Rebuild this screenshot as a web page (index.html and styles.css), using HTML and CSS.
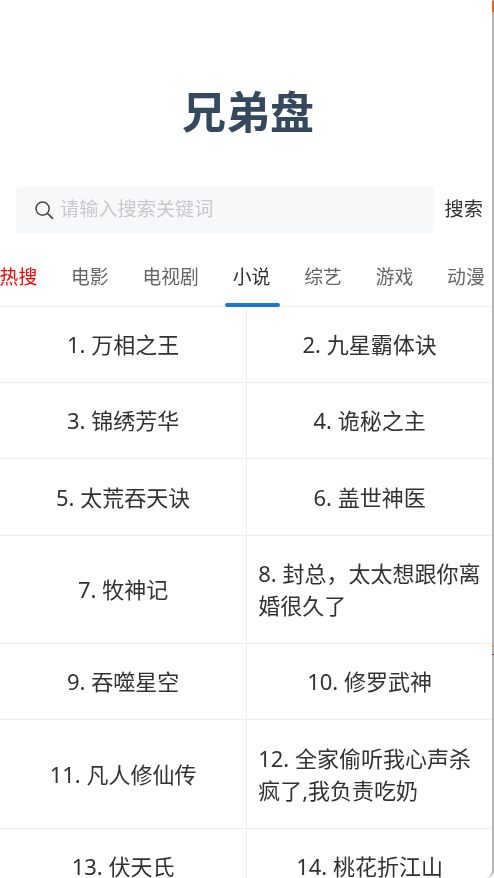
FILE: index.html
```html
<!DOCTYPE html>
<html lang="zh">
<head>
<meta charset="utf-8">
<title>兄弟盘</title>
<link rel="stylesheet" href="styles.css">
</head>
<body>
<div class="frame">
  <h1 class="title">兄弟盘</h1>
  <div class="search">
    <div class="search-box">
      <svg class="search-icon" viewBox="0 0 20 20" width="20" height="20"><circle cx="8.6" cy="8.6" r="6.6" fill="none" stroke="#444" stroke-width="1.5"/><path d="M13.4 13.4 L18.6 18.4" fill="none" stroke="#444" stroke-width="1.5" stroke-linecap="round"/></svg>
      <span class="placeholder">请输入搜索关键词</span>
    </div>
    <span class="search-btn">搜索</span>
  </div>
  <nav class="tabs">
    <span class="tab hot">热搜</span>
    <span class="tab">电影</span>
    <span class="tab">电视剧</span>
    <span class="tab active">小说</span>
    <span class="tab">综艺</span>
    <span class="tab">游戏</span>
    <span class="tab">动漫</span>
  </nav>
  <div class="list">
    <div class="cell">1. 万相之王</div>
    <div class="cell">2. 九星霸体诀</div>
    <div class="cell">3. 锦绣芳华</div>
    <div class="cell">4. 诡秘之主</div>
    <div class="cell">5. 太荒吞天诀</div>
    <div class="cell">6. 盖世神医</div>
    <div class="cell">7. 牧神记</div>
    <div class="cell">8. 封总，太太想跟你离婚很久了</div>
    <div class="cell">9. 吞噬星空</div>
    <div class="cell">10. 修罗武神</div>
    <div class="cell">11. 凡人修仙传</div>
    <div class="cell">12. 全家偷听我心声杀疯了,我负责吃奶</div>
    <div class="cell">13. 伏天氏</div>
    <div class="cell">14. 桃花折江山</div>
  </div>
</div>
<span class="edge-mark edge-top"></span>
<span class="edge-mark edge-mid"></span>
<span class="edge-mark edge-low"></span>
</body>
</html>
```
FILE: styles.css
```css
* { box-sizing: border-box; }
html, body { margin: 0; height: 100%; overflow: hidden; background: #fff; }
body { font-family: "Noto Sans", "Noto Sans CJK SC", sans-serif; color: #323233; position: relative; }
.frame {
  width: 494px;
  height: 878px;
  overflow: hidden;
  border-right: 2px solid #b4b4b4;
  border-bottom-right-radius: 8px;
  filter: blur(0.35px);
}
.title {
  margin: 0;
  padding-top: 83px;
  padding-left: 4px;
  height: 187px;
  text-align: center;
  font-size: 44px;
  line-height: 58px;
  font-weight: 700;
  color: #34495e;
}
.search { display: flex; align-items: center; padding-left: 16px; }
.search-box {
  width: 418px;
  height: 46px;
  background: #f7f8fa;
  border-radius: 3px;
  display: flex;
  align-items: center;
  padding-left: 18px;
  gap: 6px;
}
.search-icon { flex: none; }
.placeholder { font-size: 19.2px; line-height: 26px; padding-bottom: 2px; color: #c8c9cc; }
.search-btn { font-size: 19.2px; line-height: 26px; padding-bottom: 2px; margin-left: 10.5px; }
.tabs {
  display: flex;
  gap: 33.9px;
  height: 73.9px;
  padding-top: 15px;
  margin-left: -0.4px;
  align-items: center;
  border-bottom: 1px solid #eeeef0;
  white-space: nowrap;
}
.tab { font-size: 18.8px; color: #646566; position: relative; line-height: 26px; }
.tab.hot { color: #f00; }
.tab.active { color: #323233; }
.tab.active::after {
  content: "";
  position: absolute;
  left: -8px;
  right: -9.5px;
  top: 39px;
  height: 4px;
  border-radius: 2px;
  background: #1976d2;
}
.list { display: grid; grid-template-columns: 247px 245px; }
.cell {
  display: flex;
  align-items: center;
  justify-content: center;
  text-align: left;
  font-size: 22px;
  line-height: 32px;
  padding: 21.3px 11px 22px 11.2px;
  border-bottom: 1px solid #eeeef0;
}
.cell:nth-child(odd) { border-right: 1px solid #eeeef0; }
.edge-mark { position: absolute; right: 0; width: 2px; }
.edge-top { top: 1px; height: 11px; background: #d2691e; }
.edge-mid { top: 645px; height: 2px; background: #c09a6b; }
.edge-low { top: 654px; height: 1px; background: #7a3b3b; }
```
